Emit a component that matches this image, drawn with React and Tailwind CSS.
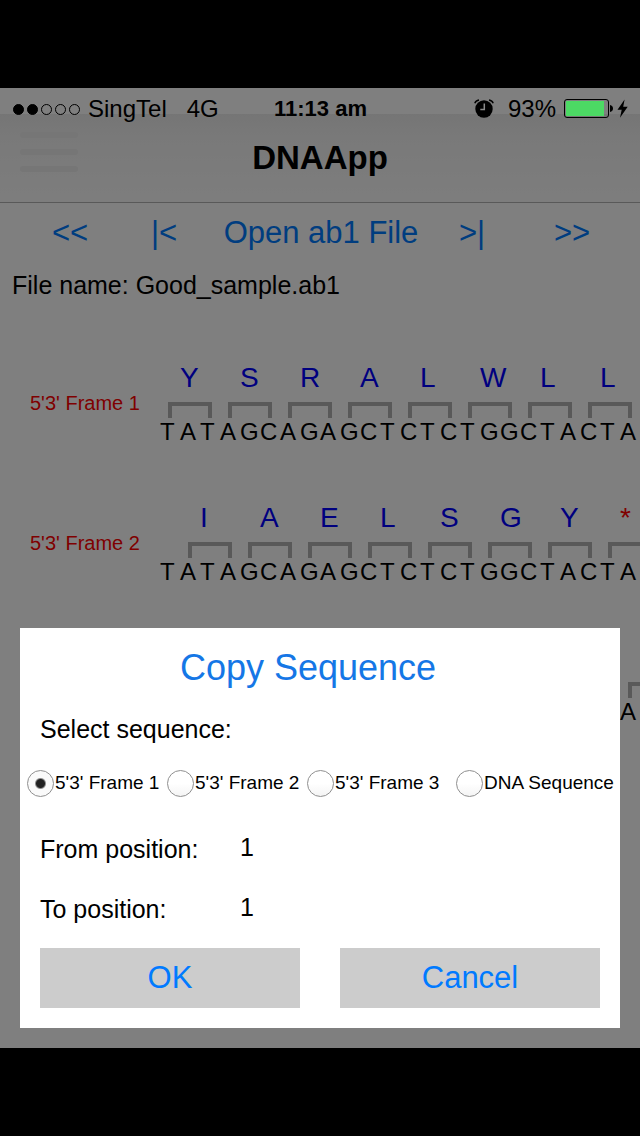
import { useState } from 'react';

const SEQUENCE = 'TATAGCAGAGCTCTCTGGCTACTA';

const frames = [
  { label: "5'3' Frame 1", offset: 'pl-0', aminoAcids: 'YSRALWLL' },
  { label: "5'3' Frame 2", offset: 'pl-5', aminoAcids: 'IAELSGY*' },
  { label: "5'3' Frame 3", offset: 'pl-10', aminoAcids: '' },
];

const sequenceOptions = ["5'3' Frame 1", "5'3' Frame 2", "5'3' Frame 3", 'DNA Sequence'];

const AlarmIcon = () => (
  <svg width="20" height="20" viewBox="0 0 20 20" aria-hidden="true">
    <circle cx="10" cy="10" r="8.700" fill="#000" />
    <path d="M0.800 4.200C1.400 2.400 3 1.300 5 1M19.200 4.200C18.600 2.400 17 1.300 15 1" fill="none" stroke="#000" strokeWidth="1.400" />
    <path d="M10.300 4.500v6H6.300" fill="none" stroke="#8a8a8a" strokeWidth="1.500" />
  </svg>
);

const BatteryIcon = () => (
  <svg width="49" height="20" viewBox="0 0 49 20" aria-hidden="true">
    <rect x="0.5" y="0.5" width="44" height="18" rx="2.5" fill="none" stroke="#000" />
    <rect x="2" y="2" width="38" height="15" fill="#4cd964" />
    <path d="M46 6c4 .5 4 6.500 0 7z" fill="#000" />
  </svg>
);

const BoltIcon = () => (
  <svg width="11" height="20" viewBox="0 0 11 20" aria-hidden="true">
    <path d="M7.600 0.500L0.500 10.800H4.700L3 18.800L10.700 7.800H6.200z" fill="#000" />
  </svg>
);

const StatusBar = () => (
  <div className="relative z-20 grid h-[42px] grid-cols-[1fr_auto_1fr] items-center pr-3 pl-[13px] text-2xl">
    <div className="flex items-center">
      <div className="mr-2 flex gap-[3px]">
        {[true, true, false, false, false].map((filled, i) => (
          <span
            key={i}
            className={`size-[11px] rounded-full border border-black ${filled ? 'bg-black' : ''}`}
          />
        ))}
      </div>
      <span>SingTel</span>
      <span className="ml-5">4G</span>
    </div>
    <span className="text-[22px] font-bold">11:13 am</span>
    <div className="flex items-center justify-end">
      <AlarmIcon />
      <span className="mr-2 ml-3.5">93%</span>
      <BatteryIcon />
      <span className="ml-1">
        <BoltIcon />
      </span>
    </div>
  </div>
);

const Header = () => (
  <header className="border-b border-[#b2b2b2] bg-[linear-gradient(#fff_26px,#ebebeb_26px,#f3f3f3_50px,#fbfbfb)]">
    <StatusBar />
    <div className="grid grid-cols-[1fr_auto_1fr] items-start px-5 pb-4">
      <button aria-label="Menu" className="mt-0.5 flex w-[58px] flex-col gap-[11px]">
        <span className="h-1.5 w-full rounded-full bg-[#ececec]" />
        <span className="h-1.5 w-full rounded-full bg-[#ececec]" />
        <span className="h-1.5 w-full rounded-full bg-[#ececec]" />
      </button>
      <h1 className="text-[33px] leading-[56px] font-bold">DNAApp</h1>
    </div>
  </header>
);

const Toolbar = () => (
  <nav className="grid grid-cols-[100fr_88fr_226fr_76fr_124fr] pr-1.5 pl-5 text-[31px] leading-[60px] whitespace-nowrap text-[#007aff]">
    <button>{'<<'}</button>
    <button>{'|<'}</button>
    <button>Open ab1 File</button>
    <button>{'>|'}</button>
    <button>{'>>'}</button>
  </nav>
);

const Frame = ({ label, offset, aminoAcids }) => (
  <section className="flex items-center pl-[30px]">
    <h2 className="w-[130px] shrink-0 text-xl text-[#ff0000]">{label}</h2>
    <div className="min-w-0 flex-1 overflow-hidden">
      <div className={`flex ${offset}`}>
        {Array.from({ length: SEQUENCE.length / 3 }, (_, i) => (
          <div key={i} className="w-[60px] shrink-0">
            <div
              className={`h-8 pl-5 text-[28px] leading-8 ${aminoAcids[i] === '*' ? 'text-[#ff0000]' : 'text-[#0000ff]'}`}
            >
              {aminoAcids[i]}
            </div>
            <div className="mx-2 mt-2 h-4 border-4 border-b-0 border-[#b3b3b3]" />
          </div>
        ))}
      </div>
      <div className="mt-0.5 flex text-2xl leading-6">
        {SEQUENCE.split('').map((base, i) => (
          <span key={i} className="w-5 shrink-0">
            {base}
          </span>
        ))}
      </div>
    </div>
  </section>
);

const PositionField = ({ id, label, value, onChange }) => (
  <div className="flex h-[60px] items-center px-5 text-[25px]">
    <label htmlFor={id} className="w-[200px]">
      {label}
    </label>
    <input
      id={id}
      inputMode="numeric"
      value={value}
      onChange={(e) => onChange(e.target.value)}
      className="min-w-0 flex-1 bg-transparent pb-1 outline-none"
    />
  </div>
);

const CopyDialog = () => {
  const [selected, setSelected] = useState(sequenceOptions[0]);
  const [from, setFrom] = useState('1');
  const [to, setTo] = useState('1');

  return (
    <div className="absolute inset-0 z-10 flex items-end bg-black/50 p-5">
      <form
        role="dialog"
        aria-labelledby="copy-title"
        className="w-full bg-white pb-5"
        onSubmit={(e) => e.preventDefault()}
      >
        <h2 id="copy-title" className="pr-6 text-center text-4xl leading-[80px] text-[#1577e6]">
          Copy Sequence
        </h2>
        <fieldset>
          <legend className="px-5 text-[25px] leading-[42px]">Select sequence:</legend>
          <div className="grid h-[66px] grid-cols-[140fr_140fr_149fr_164fr] items-center pl-[7px] text-[19px] whitespace-nowrap">
            {sequenceOptions.map((option) => (
              <label key={option} className="flex items-center gap-px">
                <input
                  type="radio"
                  name="sequence"
                  checked={selected === option}
                  onChange={() => setSelected(option)}
                  className="size-[27px] shrink-0 appearance-none rounded-full border border-[#8f8f8f] bg-linear-to-b from-white from-50% to-[#f4f4f4] checked:bg-[radial-gradient(circle,#222_4px,#fafafa_6px)]"
                />
                {option}
              </label>
            ))}
          </div>
        </fieldset>
        <div className="mt-1 mb-2">
          <PositionField id="from" label="From position:" value={from} onChange={setFrom} />
          <PositionField id="to" label="To position:" value={to} onChange={setTo} />
        </div>
        <div className="grid grid-cols-2 gap-10 px-5 text-[31px] leading-[60px] text-[#007aff]">
          <button type="submit" className="bg-[#ccc]">OK</button>
          <button type="button" className="bg-[#ccc]">Cancel</button>
        </div>
      </form>
    </div>
  );
};

const App = () => {
  return (
    <div className="flex min-h-screen flex-col bg-black py-[88px] font-['Liberation_Sans',Arial,sans-serif] text-black">
      <div className="relative flex-1 overflow-hidden bg-white">
        <Header />
        <Toolbar />
        <p className="px-3 text-[25px] leading-[44px]">File name: Good_sample.ab1</p>
        <main className="mt-[55px] flex flex-col gap-[58px]">
          {frames.map((frame) => (
            <Frame key={frame.label} {...frame} />
          ))}
        </main>
        <CopyDialog />
      </div>
    </div>
  );
};

export default App;
